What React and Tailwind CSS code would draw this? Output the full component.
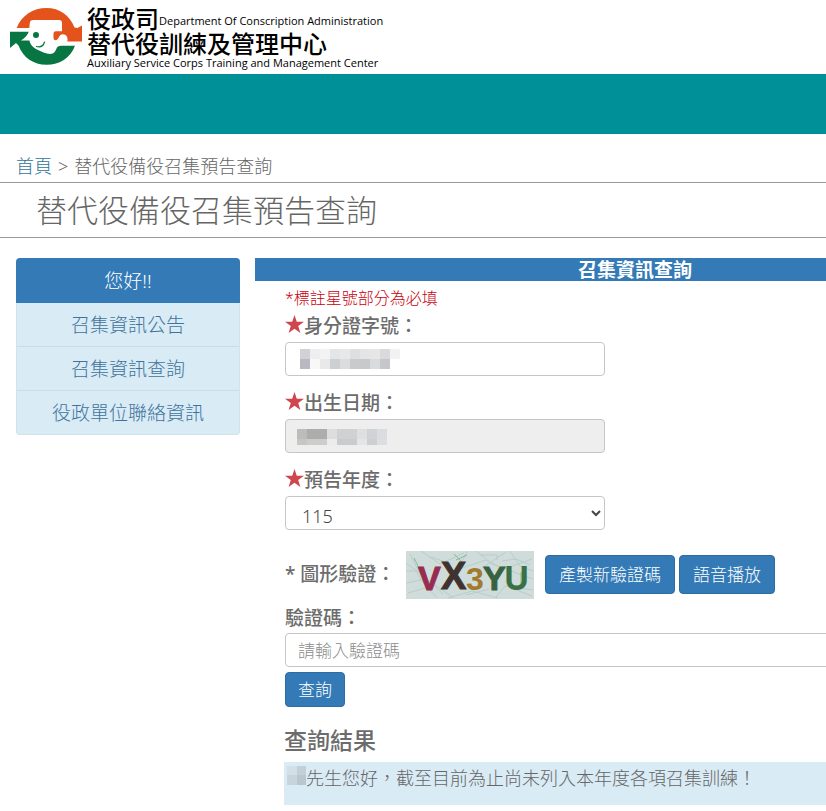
import React from "react";

const menuItems = ["召集資訊公告", "召集資訊查詢", "役政單位聯絡資訊"];

function Logo() {
  return (
    <svg className="h-[60px] w-[76px] shrink-0" viewBox="8 6 76 60" aria-hidden="true">
      <path d="M16.700 28C21.500 15.500 33 8 46.500 8C59.500 8 70 15.500 74.500 27.500L77.500 28L82 25.500V41.500H67.300C67.800 39.500 67.500 37.500 66.500 36C65.500 34.300 62.500 33.500 60.500 35C59 36.300 58.500 39.500 56 40.200C54.500 40.600 53.500 39.500 53.500 37.500V34C53.500 32 54.500 31.300 56 31.300H62V23C62 21 61 20 59.300 20H33.500C31 20 30 21 29.800 23L29.300 28Z" fill="#e4531c" />
      <path d="M10 31.700H28.700C27.500 35 25 38 21 40.500H29.500C30 44.500 33 47.500 37 49.500C41 51.500 46 53.800 50 54C54 54 55.500 51 56.500 48.500C57.300 46.500 58.500 45.700 61 45.700H75C70.500 57.500 60 64.800 46.500 64.800C33.500 64.800 23 57.500 18.500 45.500L16 43L10 48Z" fill="#087642" />
      <circle cx="36" cy="35" r="3" fill="#087642" />
      <path d="M44.500 42C43.500 45.500 40.500 47.500 36.500 46.500" fill="none" stroke="#087642" strokeWidth="1.200" strokeLinecap="round" />
    </svg>
  );
}

function Star() {
  return (
    <svg className="mb-[2px] size-[19px] shrink-0" viewBox="0 0 20 20" aria-hidden="true">
      <path d="M10 0L12.400 7H20L13.900 11.600L16.200 19L10 14.600L3.800 19L6.100 11.600L0 7H7.600Z" fill="#cf464e" />
    </svg>
  );
}

function Mosaic({ cells, className, width, height }) {
  return (
    <svg className={className} width={width} height={height} shapeRendering="crispEdges" aria-hidden="true">
      {cells.map(([x, y, w, h, c], i) => (
        <rect key={i} x={x} y={y} width={w} height={h} fill={c} />
      ))}
    </svg>
  );
}

const idCells = [
  [0, 0, 10, 10, "#d2d2d6"], [10, 0, 10, 10, "#eeeef0"], [20, 0, 10, 10, "#f3f3f3"],
  [30, 0, 10, 10, "#e4e5e7"], [40, 0, 10, 10, "#e7e8e8"], [50, 0, 10, 10, "#dedfe0"],
  [60, 0, 10, 10, "#e4e5e6"], [70, 0, 10, 10, "#e6e6e7"], [80, 0, 10, 10, "#dadadd"],
  [90, 0, 10, 10, "#f2f2f4"], [0, 10, 10, 10, "#b9bac1"], [10, 10, 10, 10, "#f8f8f8"],
  [20, 10, 10, 10, "#e9e9e9"], [30, 10, 10, 10, "#cecfd0"], [40, 10, 10, 10, "#dbdcdc"],
  [50, 10, 10, 10, "#c9cacc"], [60, 10, 10, 10, "#c7c9cb"], [70, 10, 10, 10, "#dadbdc"],
  [80, 10, 10, 10, "#c6c7ca"],
];

const dateCells = [
  [0, 0, 10, 10, "#bcbcbb"], [10, 0, 20, 10, "#adadad"], [30, 0, 10, 10, "#dcdddd"],
  [40, 0, 20, 10, "#cfd1d2"], [60, 0, 10, 10, "#dddfe0"], [70, 0, 10, 10, "#d0d3d5"],
  [80, 0, 10, 10, "#dadcdf"], [0, 10, 10, 6, "#c6c6c5"], [10, 10, 20, 6, "#cdcdcc"],
  [30, 10, 10, 6, "#ececec"], [40, 10, 20, 6, "#c8ccce"], [60, 10, 10, 6, "#e3e5e6"],
  [70, 10, 10, 6, "#ccd0d2"], [80, 10, 10, 6, "#dcdfe1"],
];

const nameCells = [
  [0, 0, 10, 9, "#d2dfe6"], [10, 0, 9, 9, "#c2cfd7"],
  [0, 9, 10, 10, "#c6d4dc"], [10, 9, 9, 10, "#b9c6ce"],
];

function Captcha() {
  return (
    <svg className="h-12 w-32 shrink-0" viewBox="0 0 128 48" role="img" aria-label="圖形驗證碼">
      <rect width="128" height="48" fill="#cfdcda" />
      <g fill="none" strokeWidth="1">
        <path d="M0 12L18 25L37 43M4 3L22 38L31 46M0 32L20 28L48 47M61 0L53 18L80 9L98 18L126 8M70 0L86 13L127 28M90 46L99 35L127 39M15 0L34 13L58 2M42 47L66 40L92 47M104 0L114 15L127 20" stroke="#b4d0c8" />
        <path d="M0 20H10L18 33M25 6L45 13M74 4H91V9M79 15L100 1M108 38L126 45M2 42L19 37M96 10L110 8L124 14M60 44L83 38" stroke="#bdc9cf" />
        <path d="M48 3L57 12M50 9L61 4M115 21V34M8 7L12 15" stroke="#83b99e" />
      </g>
      <g fontFamily="'Liberation Sans', sans-serif" fontWeight="700">
        <text x="12" y="39" fontSize="34" fill="#972b50" stroke="#972b50">V</text>
        <text x="35" y="38" fontSize="38" fill="#40322e" stroke="#40322e">X</text>
        <text x="60" y="39" fontSize="32" fill="#a17a30">3</text>
        <text x="77" y="39" fontSize="34" fill="#38613d" stroke="#38613d">Y</text>
        <text x="99" y="38" fontSize="32" fill="#397044" fontWeight="400" stroke="#397044" strokeWidth="2">U</text>
      </g>
    </svg>
  );
}

function Field({ id, label, children }) {
  return (
    <div className="mb-[11px]">
      <label htmlFor={id} className="flex h-[31px] items-center text-[19px] leading-[31px] font-medium text-[#6c6c6c]">
        <Star />
        <span className="pt-px">{label}：</span>
      </label>
      <div className="relative mt-px w-80">{children}</div>
    </div>
  );
}

const control = "block h-[34px] w-full rounded border border-[#c6c6ca] px-3 text-[17px]";
const button = "rounded border border-[#2e6da4] bg-[#337ab7] text-[17px] leading-6 text-white";

export default function App() {
  return (
    <div className="min-h-screen overflow-hidden bg-white font-['Noto_Sans','Noto_Sans_CJK_TC',sans-serif] font-light text-[#666]">
      <header>
        <div className="flex h-[74px] items-start px-2 pt-[6px]">
          <Logo />
          <div className="ml-[3px] whitespace-nowrap font-['Open_Sans','Noto_Sans_CJK_TC',sans-serif] font-medium text-black">
            <div className="flex h-[25px] items-center">
              <span className="text-2xl leading-[25px]">役政司</span>
              <span className="pt-[5px] text-[11px]">Department Of Conscription Administration</span>
            </div>
            <div className="text-2xl leading-[26px]">替代役訓練及管理中心</div>
            <div className="text-[11px] leading-[11px]">Auxiliary Service Corps Training and Management Center</div>
          </div>
        </div>
        <div className="h-[60px] bg-[#009097]" />
      </header>

      <nav className="flex h-[49px] items-end gap-[6px] border-b border-[#999] px-4 pb-1 text-lg leading-6" aria-label="導覽路徑">
        <a href="#" className="text-[#2f7399]">首頁</a>
        <span>&gt;</span>
        <span>替代役備役召集預告查詢</span>
      </nav>
      <h1 className="h-[55px] border-b border-[#999] px-9 text-[31px] leading-[54px] font-light">替代役備役召集預告查詢</h1>

      <div className="mt-5 flex gap-[15px] px-4">
        <aside className="w-56 shrink-0 text-center text-[19px]">
          <div className="h-[45px] rounded-t bg-[#337ab7] leading-[46px] text-white">您好!!</div>
          <nav className="overflow-hidden rounded-b border border-t-0 border-[#d0e2ea] bg-[#d9ebf5] text-[#3f739c]">
            {menuItems.map((item) => (
              <a key={item} href="#" className="block h-11 border-b border-[#cadde6] leading-[44px] last:h-[43px] last:border-b-0">{item}</a>
            ))}
          </nav>
        </aside>

        <main className="min-w-[760px] flex-1">
          <h2 className="h-[23px] bg-[#337ab7] text-center text-[19px] leading-[24px] font-bold text-white">召集資訊查詢</h2>
          <form className="pl-[30px]" onSubmit={(e) => e.preventDefault()}>
            <p className="pt-[5px] text-base leading-6 text-[#c8000c]">*標註星號部分為必填</p>
            <Field id="idno" label="身分證字號">
              <input id="idno" type="text" className={control} />
              <Mosaic cells={idCells} width={100} height={20} className="pointer-events-none absolute top-[7px] left-[15px]" />
            </Field>
            <Field id="birth" label="出生日期">
              <input id="birth" type="text" readOnly className={`${control} bg-[#eee]`} />
              <Mosaic cells={dateCells} width={90} height={16} className="pointer-events-none absolute top-[10px] left-3" />
            </Field>
            <Field id="year" label="預告年度">
              <select id="year" className="block h-[34px] w-full rounded border border-[#c6c6ca] bg-white pt-[6px] pl-3 text-lg text-[#444]">
                <option>115</option>
              </select>
            </Field>

            <div className="mt-[21px] flex items-start">
              <span className="w-[121px] text-[19px] leading-[46px] font-medium text-[#6c6c6c]">* 圖形驗證：</span>
              <Captcha />
              <button type="button" className={`${button} mt-1 ml-[11px] h-[39px] px-[13px]`}>產製新驗證碼</button>
              <button type="button" className={`${button} mt-1 ml-1 h-[39px] px-[13px]`}>語音播放</button>
            </div>
            <label htmlFor="code" className="mt-1 block text-[19px] leading-[30px] font-medium text-[#6c6c6c]">驗證碼：</label>
            <input id="code" type="text" placeholder="請輸入驗證碼" className={`${control} placeholder:text-[#8c8c8c]`} />
            <button type="submit" className={`${button} mt-[5px] h-[35px] px-3`}>查詢</button>
          </form>

          <section className="pl-[29px]">
            <h2 className="mt-[18px] text-[23px] leading-[30px] font-medium text-[#6c6c6c]">查詢結果</h2>
            <div className="mt-[7px] flex h-[43px] items-start bg-[#d9ebf5] pl-[3px] text-lg leading-8">
              <Mosaic cells={nameCells} width={19} height={19} className="mt-1 shrink-0" />
              <span>先生您好，截至目前為止尚未列入本年度各項召集訓練！</span>
            </div>
          </section>
        </main>
      </div>
    </div>
  );
}
